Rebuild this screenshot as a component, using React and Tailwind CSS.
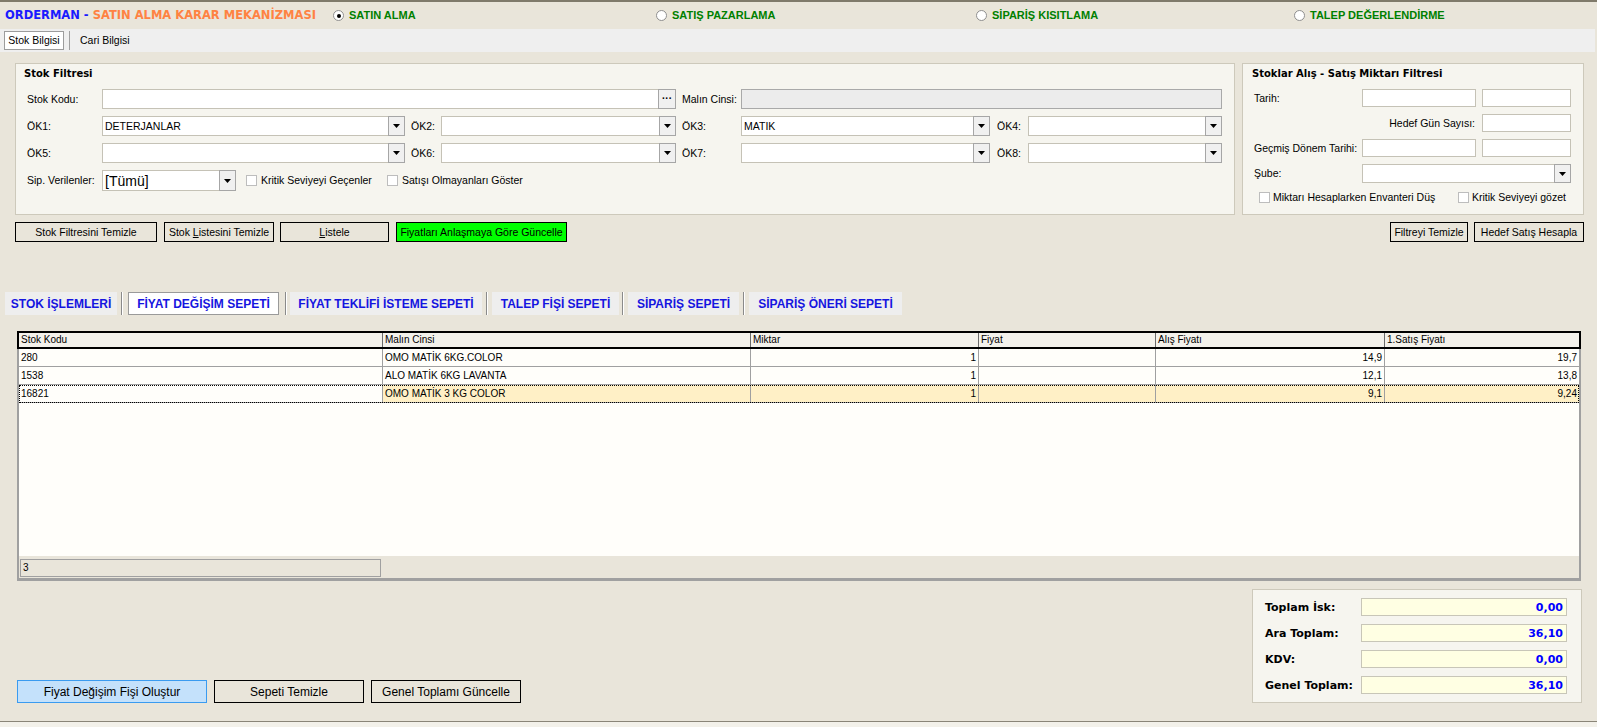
import React from "react";

const rows = [
  ["280", "OMO MATİK 6KG.COLOR", "1", "", "14,9", "19,7"],
  ["1538", "ALO MATİK 6KG LAVANTA", "1", "", "12,1", "13,8"],
  ["16821", "OMO MATİK 3 KG COLOR", "1", "", "9,1", "9,24"],
];

const cols = "grid grid-cols-[364px_368px_228px_177px_229px_1fr]";

const Tri = () => (
  <svg width="7" height="4" viewBox="0 0 7 4">
    <path d="M0 0h7L3.5 4z" fill="#000" />
  </svg>
);

function Radio({ checked, label, className = "" }) {
  return (
    <div className={`flex items-center ${className}`}>
      <div className="w-[11px] h-[11px] rounded-full border border-[#8f8f8f] bg-white flex items-center justify-center">
        {checked && <div className="w-[4px] h-[4px] rounded-full bg-black" />}
      </div>
      <span className="ml-[5px] font-bold text-[11px] text-[#008000] whitespace-nowrap">{label}</span>
    </div>
  );
}

function Combo({ className = "", value, valueClass = "text-[10.5px]" }) {
  return (
    <div className={`flex items-stretch bg-white border border-[#c5c2b6] ${className}`}>
      <div className={`flex-1 flex items-center pl-[2px] overflow-hidden whitespace-nowrap ${valueClass}`}>{value}</div>
      <div className="w-[17px] -my-px -mr-px flex items-center justify-center bg-[#f0f0f0] border border-[#a6a6a6]">
        <Tri />
      </div>
    </div>
  );
}

const Input = ({ className = "" }) => <div className={`h-full bg-white border border-[#c5c2b6] ${className}`} />;

const Check = () => <div className="w-[11px] h-[11px] border border-[#bdbdbd] bg-white shrink-0" />;

function Btn({ className = "", children }) {
  return (
    <div className={`flex items-center justify-center border border-black whitespace-nowrap ${className}`}>{children}</div>
  );
}

function Tab({ sel, className = "", children }) {
  return (
    <div
      className={`h-full flex items-center justify-center whitespace-nowrap ${
        sel ? "bg-white border border-[#9a9a9a]" : "bg-[#eeeeee]"
      } ${className}`}
    >
      {children}
    </div>
  );
}

const Sep = ({ className = "" }) => (
  <div className={`w-[2px] h-full border-l border-[#8a8a8a] border-r border-r-white ${className}`} />
);

export default function App() {
  return (
    <div className="w-[1597px] h-[727px] overflow-hidden bg-[#e9e5da] flex flex-col border-t-2 border-[#7f7a6b] font-['Liberation_Sans',Arial,sans-serif] text-[10.5px] text-black leading-none">
      {/* title row */}
      <div className="h-[27px] flex items-center pl-[5px] shrink-0">
        <div className="w-[328px] font-['DejaVu_Sans',sans-serif] font-bold text-[11.5px] whitespace-nowrap">
          <span className="text-[#1a1aff]">ORDERMAN - </span>
          <span className="text-[#ff8242]">SATIN ALMA KARAR MEKANİZMASI</span>
        </div>
        <Radio checked label="SATIN ALMA" className="w-[323px]" />
        <Radio label="SATIŞ PAZARLAMA" className="w-[320px]" />
        <Radio label="SİPARİŞ KISITLAMA" className="w-[318px]" />
        <Radio label="TALEP DEĞERLENDİRME" />
      </div>

      {/* page tabs */}
      <div className="h-[23px] w-[1595px] bg-[#efefef] flex items-center pl-[4px] shrink-0">
        <div className="w-[60px] h-[19px] bg-white border border-[#9c9c9c] flex items-center justify-center">Stok Bilgisi</div>
        <div className="ml-[5px] w-px h-[19px] bg-[#a0a0a0]" />
        <div className="ml-[10px]">Cari Bilgisi</div>
      </div>

      {/* filters */}
      <div className="mt-[11px] flex h-[152px] shrink-0">
        <div className="ml-[15px] w-[1220px] bg-[#f6f5ef] border border-[#cdc9bb] pl-[11px]">
          <div className="h-[14px] mt-[3px] -ml-[3px] flex items-center font-['DejaVu_Sans',sans-serif] font-bold text-[10px]">
            Stok Filtresi
          </div>
          <div className="mt-[8px] flex flex-col gap-[7px]">
            <div className="flex h-[20px] items-center">
              <div className="w-[75px]">Stok Kodu:</div>
              <div className="w-[574px] h-full bg-white border border-[#c5c2b6] flex justify-end">
                <div className="w-[18px] -my-px -mr-px bg-[#f0f0f0] border border-[#a6a6a6] flex items-center justify-center font-bold text-[10px]">
                  ···
                </div>
              </div>
              <div className="ml-[6px] w-[59px]">Malın Cinsi:</div>
              <div className="w-[481px] h-full bg-[#ececec] border border-[#a9a9a9]" />
            </div>
            <div className="flex h-[20px] items-center">
              <div className="w-[75px]">ÖK1:</div>
              <Combo className="w-[303px] h-full" value="DETERJANLAR" />
              <div className="ml-[6px] w-[30px]">ÖK2:</div>
              <Combo className="w-[235px] h-full" />
              <div className="ml-[6px] w-[59px]">ÖK3:</div>
              <Combo className="w-[249px] h-full" value="MATIK" />
              <div className="ml-[7px] w-[31px]">ÖK4:</div>
              <Combo className="w-[194px] h-full" />
            </div>
            <div className="flex h-[20px] items-center">
              <div className="w-[75px]">ÖK5:</div>
              <Combo className="w-[303px] h-full" />
              <div className="ml-[6px] w-[30px]">ÖK6:</div>
              <Combo className="w-[235px] h-full" />
              <div className="ml-[6px] w-[59px]">ÖK7:</div>
              <Combo className="w-[249px] h-full" />
              <div className="ml-[7px] w-[31px]">ÖK8:</div>
              <Combo className="w-[194px] h-full" />
            </div>
            <div className="flex h-[21px] items-center">
              <div className="w-[75px]">Sip. Verilenler:</div>
              <Combo className="w-[134px] h-full" value="[Tümü]" valueClass="text-[14px]" />
              <div className="ml-[10px] w-[141px] flex items-center">
                <Check />
                <span className="ml-[4px] whitespace-nowrap">Kritik Seviyeyi Geçenler</span>
              </div>
              <Check />
              <span className="ml-[4px] whitespace-nowrap">Satışı Olmayanları Göster</span>
            </div>
          </div>
        </div>

        <div className="ml-[7px] w-[342px] bg-[#f6f5ef] border border-[#cdc9bb] pl-[11px]">
          <div className="h-[14px] mt-[3px] -ml-[2px] flex items-center font-['DejaVu_Sans',sans-serif] font-bold text-[10px] whitespace-nowrap">
            Stoklar Alış - Satış Miktarı Filtresi
          </div>
          <div className="mt-[8px] flex flex-col gap-[7px]">
            <div className="flex h-[18px] items-center">
              <div className="w-[108px]">Tarih:</div>
              <Input className="w-[114px]" />
              <Input className="ml-[6px] w-[89px]" />
            </div>
            <div className="flex h-[18px] items-center">
              <div className="w-[222px] text-right pr-px">Hedef Gün Sayısı:</div>
              <Input className="ml-[6px] w-[89px]" />
            </div>
            <div className="flex h-[18px] items-center">
              <div className="w-[108px] whitespace-nowrap">Geçmiş Dönem Tarihi:</div>
              <Input className="w-[114px]" />
              <Input className="ml-[6px] w-[89px]" />
            </div>
            <div className="flex h-[19px] items-center">
              <div className="w-[108px]">Şube:</div>
              <Combo className="w-[209px] h-full" />
            </div>
            <div className="flex h-[14px] items-center">
              <div className="ml-[5px] w-[199px] flex items-center">
                <Check />
                <span className="ml-[3px] whitespace-nowrap">Miktarı Hesaplarken Envanteri Düş</span>
              </div>
              <Check />
              <span className="ml-[3px] whitespace-nowrap">Kritik Seviyeyi gözet</span>
            </div>
          </div>
        </div>
      </div>

      {/* filter buttons */}
      <div className="mt-[7px] h-[20px] flex shrink-0">
        <Btn className="ml-[15px] w-[142px]">Stok Filtresini Temizle</Btn>
        <Btn className="ml-[7px] w-[110px]">
          <span>
            Stok <u>L</u>istesini Temizle
          </span>
        </Btn>
        <Btn className="ml-[6px] w-[109px]">
          <span>
            <u>L</u>istele
          </span>
        </Btn>
        <Btn className="ml-[7px] w-[171px] bg-[#00ff00]">Fiyatları Anlaşmaya Göre Güncelle</Btn>
        <Btn className="ml-auto w-[78px]">Filtreyi Temizle</Btn>
        <Btn className="ml-[6px] mr-[13px] w-[110px]">Hedef Satış Hesapla</Btn>
      </div>

      {/* basket tabs */}
      <div className="mt-[50px] h-[23px] flex font-bold text-[12px] text-[#1515e0] shrink-0">
        <Tab className="ml-[5px] w-[112px]">STOK İŞLEMLERİ</Tab>
        <Sep className="ml-[4px]" />
        <Tab sel className="ml-[5px] w-[151px]">FİYAT DEĞİŞİM SEPETİ</Tab>
        <Sep className="ml-[6px]" />
        <Tab className="ml-[3px] w-[192px]">FİYAT TEKLİFİ İSTEME SEPETİ</Tab>
        <Sep className="ml-[4px]" />
        <Tab className="ml-[4px] w-[127px]">TALEP FİŞİ SEPETİ</Tab>
        <Sep className="ml-[3px]" />
        <Tab className="ml-[4px] w-[111px]">SİPARİŞ SEPETİ</Tab>
        <Sep className="ml-[4px]" />
        <Tab className="ml-[4px] w-[153px]">SİPARİŞ ÖNERİ SEPETİ</Tab>
      </div>

      {/* grid */}
      <div className="mt-[16px] ml-[17px] w-[1564px] h-[250px] flex flex-col text-[10px] shrink-0">
        <div className={`h-[18px] border-2 border-black bg-[#f3f1eb] ${cols}`}>
          {["Stok Kodu", "Malın Cinsi", "Miktar", "Fiyat", "Alış Fiyatı", "1.Satış Fiyatı"].map((h, i) => (
            <div key={h} className={`flex items-center pl-[2px] ${i < 5 ? "border-r border-[#6b6b6b]" : ""}`}>
              {h}
            </div>
          ))}
        </div>
        <div className="flex-1 bg-[#fffefa] border-x-2 border-[#a0a0a0]">
          {rows.map((r, ri) => {
            const sel = ri === 2;
            return (
              <div
                key={ri}
                className={`h-[18px] ${cols} ${sel ? "outline-1 outline-dotted outline-black -outline-offset-1" : ""}`}
              >
                {r.map((c, ci) => (
                  <div
                    key={ci}
                    className={`flex items-center border-b border-[#a0a0a0] ${ci < 5 ? "border-r" : ""} ${
                      ci >= 2 ? "justify-end pr-[2px]" : "pl-[2px]"
                    } ${sel && ci > 0 ? "bg-[#fff0c6]" : ""}`}
                  >
                    {c}
                  </div>
                ))}
              </div>
            );
          })}
        </div>
        <div className="h-[25px] border-x-2 border-b-[3px] border-[#a0a0a0] bg-[#e9e5da] pt-[3px]">
          <div className="ml-px w-[361px] h-[18px] border border-[#a0a0a0] flex items-center pl-[2px]">3</div>
        </div>
      </div>

      {/* bottom */}
      <div className="mt-[8px] h-[114px] flex items-end shrink-0">
        <div className="ml-[17px] flex h-[23px] text-[12px]">
          <div className="w-[190px] bg-[#c4e1fb] border border-[#3a9bf0] flex items-center justify-center">
            Fiyat Değişim Fişi Oluştur
          </div>
          <Btn className="ml-[7px] w-[150px]">Sepeti Temizle</Btn>
          <Btn className="ml-[7px] w-[150px]">Genel Toplamı Güncelle</Btn>
        </div>
        <div className="ml-auto mr-[15px] w-[330px] h-full bg-[#f6f5ef] border border-[#cdc9bb] pt-[8px] pl-[12px] flex flex-col gap-[8px]">
          {[
            ["Toplam İsk:", "0,00"],
            ["Ara Toplam:", "36,10"],
            ["KDV:", "0,00"],
            ["Genel Toplam:", "36,10"],
          ].map(([l, v]) => (
            <div key={l} className="flex h-[18px] items-center font-['DejaVu_Sans',sans-serif] font-bold text-[11px]">
              <div className="w-[96px] whitespace-nowrap">{l}</div>
              <div className="w-[206px] h-full bg-[#ffffe3] border border-[#c8c6b8] flex items-center justify-end pr-[3px] text-[#0000ff]">
                {v}
              </div>
            </div>
          ))}
        </div>
      </div>

      <div className="flex-1" />
      <div className="h-[6px] border-t border-[#8a8578] bg-[#f3f1ea] shrink-0" />
    </div>
  );
}
